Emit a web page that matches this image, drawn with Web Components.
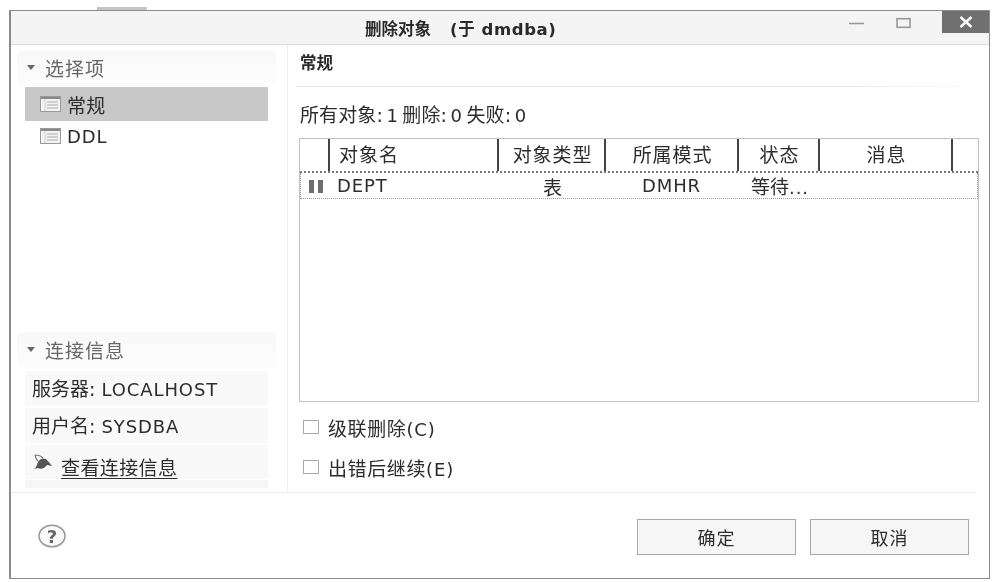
<!DOCTYPE html>
<html>
<head>
<meta charset="utf-8">
<style>
  html, body { margin: 0; background: #fff; }
  body { width: 993px; height: 582px; overflow: hidden; padding: 7px 0 0 0; box-sizing: border-box;
    font-family: "DejaVu Sans", "Noto Sans CJK SC", sans-serif; font-size: 19px; color: #2c2c2c; }
  .peek { height: 3px; width: 50px; margin-left: 97px; background: #c4c4c4; }
</style>
</head>
<body>
<div class="peek"></div>
<delete-dialog></delete-dialog>

<script>
function define(name, html) {
  customElements.define(name, class extends HTMLElement {
    constructor() {
      super();
      this.attachShadow({ mode: 'open' }).innerHTML = html;
    }
  });
}

// latin text runs are smaller and wider than the cjk ones
define('lat-n', `<style>:host{font-size:18px;letter-spacing:.9px}</style><slot></slot>`);

const listIcon = `<svg width="21" height="16" viewBox="0 0 21 16">
  <rect x=".5" y=".5" width="20" height="15" fill="#f4f4f4" stroke="#999"/>
  <rect x="1" y="1" width="19" height="2" fill="#888"/>
  <path d="M5 3v12" stroke="#ccc"/>
  <path d="M7 6h11M7 9h11M7 12h11" stroke="#aaa"/>
</svg>`;

define('list-icon', `<style>:host{display:block;width:21px;height:16px}svg{display:block}</style>${listIcon}`);

define('title-bar', `<style>
  :host{display:flex;height:33px;background:#f4f4f4;border-bottom:1px solid #dcdcdc;align-items:center}
  .t{margin-left:354px;font-weight:bold;font-size:16.5px;color:#2a2a2a;white-space:nowrap;display:flex;gap:19px}
  .b{letter-spacing:.6px}
  .ctl{margin-left:auto;display:flex;height:22px;align-self:flex-start}
  svg{display:block}
  .close{width:47px;height:22px;background:#707070;display:flex;align-items:center;justify-content:center}
</style>
<div class="t"><span>删除对象</span><span class="b">(于 dmdba)</span></div>
<div class="ctl">
  <svg width="32" height="22"><path d="M0 12.5h15" stroke="#999" stroke-width="1.6"/></svg>
  <svg width="46" height="22" style="margin-left:15px"><rect x="1" y="7.7" width="13" height="8.6" fill="none" stroke="#999" stroke-width="1.6"/></svg>
  <div class="close"><svg width="14" height="12"><path d="M1.5 1l11 10M12.5 1l-11 10" stroke="#fff" stroke-width="2.4"/></svg></div>
</div>`);

define('side-head', `<style>
  :host{display:flex;align-items:center;height:32px;padding-bottom:3px;margin-bottom:1px;box-sizing:content-box;background:linear-gradient(#f8f8f8,#fdfdfd);border-radius:3px;color:#666;padding-left:10px;gap:10px;letter-spacing:1px}
  svg{display:block}
</style>
<svg width="8" height="5"><path d="M0 0h8L4 5z" fill="#666"/></svg><span><slot></slot></span>`);

define('nav-row', `<style>
  :host{display:flex;align-items:center;gap:6px;margin-left:8px;width:243px;padding-left:15px;box-sizing:border-box;height:34px;letter-spacing:.3px}
  :host([selected]){background:#c8c8c8}
  :host(:not([selected])){height:29px}
</style>
<list-icon></list-icon><span><slot></slot></span>`);

define('info-row', `<style>
  :host{display:block;margin-left:8px;width:243px;padding-left:7px;box-sizing:border-box;height:35px;line-height:37px;background:#f9f9f9;margin-bottom:2px;white-space:nowrap}
</style><slot></slot>`);

define('conn-link', `<style>
  :host{display:block;margin-left:8px;width:243px;height:43px;box-sizing:border-box;background:linear-gradient(#f9f9f9 0,#f9f9f9 34px,#fff 34px,#fff 35px,#f6f6f6 35px)}
  .r{display:flex;align-items:flex-start;padding:9px 0 0 8px;gap:8px}
  svg{display:block;flex:none}
  a{color:inherit;text-decoration:underline;text-underline-offset:3px;line-height:27px;letter-spacing:.4px;margin-top:1px}
</style>
<div class="r">
  <svg width="20" height="18" viewBox="0 0 20 18">
    <path d="M2 1c1 3 1 5 3 6M2 1c3 0 6 1 8 3" fill="none" stroke="#777" stroke-width="1.2"/>
    <path d="M5 8c2-4 7-5 10-1l4 5-5-1c-2 3-6 5-9 3L1 15c2-1 3-4 4-7z" fill="#555"/>
  </svg>
  <a>查看连接信息</a>
</div>`);

define('obj-table', `<style>
  :host{display:block;width:680px;height:264px;box-sizing:border-box;border:1px solid #c2c2c2;background:#fff}
  .row{display:grid;grid-template-columns:30px 169px 107px 133px 81px 133px 1fr}
  .head{height:32px;line-height:33px;border-bottom:2px dotted #777;box-sizing:content-box;background:#fff}
  .head span{box-sizing:border-box;border-right:2px solid #444;text-align:center;white-space:nowrap;height:32px;letter-spacing:.9px;padding-left:2px}
  .head span:last-child{border:0}
  .head .name{text-align:left;padding-left:9px;letter-spacing:1px}
  .data{height:25px;line-height:23px;border:1px dotted #999;border-top:0;align-items:center}
  .data > *{white-space:nowrap}
  .c{text-align:center}
  .lat{padding-bottom:2px}
  .cjk{padding-top:3px;line-height:22px}
  .pause{display:flex;gap:4px;padding-left:8px}
  .pause i{display:block;width:5px;height:13px;background:#6e6e6e}
</style>
<div class="row head">
  <span></span><span class="name">对象名</span><span>对象类型</span><span>所属模式</span><span>状态</span><span>消息</span><span></span>
</div>
<div class="row data">
  <div class="pause"><i></i><i></i></div>
  <div class="lat" style="padding-left:6px"><lat-n>DEPT</lat-n></div>
  <div class="c cjk" style="padding-right:2px">表</div>
  <div class="c lat" style="padding-right:4px"><lat-n>DMHR</lat-n></div>
  <div class="cjk" style="padding-left:11px">等待<lat-n>...</lat-n></div>
  <div></div><div></div>
</div>`);

define('check-row', `<style>
  :host{display:flex;align-items:center;height:40px;padding-left:4px;gap:9px;letter-spacing:.6px}
  i{display:block;width:16px;height:14px;box-sizing:border-box;border:1px solid #aaa;background:#fff}
</style><i></i><span><slot></slot></span>`);

define('dlg-button', `<style>
  :host{display:flex;align-items:center;justify-content:center;width:159px;height:36px;box-sizing:border-box;border:1px solid #a8a8a8;background:#f6f6f6;letter-spacing:1px;font-size:18px}
</style><slot></slot>`);

define('delete-dialog', `<style>
  :host{display:flex;flex-direction:column;width:981px;height:569px;margin-left:9px;box-sizing:border-box;border:1px solid #8c8c8c;border-left-width:2px;background:#fff;filter:blur(.45px)}
  .body{display:flex;height:447px;padding-left:6px;border-bottom:1px solid #ececec;margin-right:14px}
  .side{flex:none;width:270px;border-right:1px solid #eee;display:flex;flex-direction:column;padding-top:6px;box-sizing:content-box}
  .side .sec{width:259px}
  .gap{height:183px}
  .main{flex:1;min-width:0;padding-left:11px;display:flex;flex-direction:column}
  .main h2{margin:0;height:41px;line-height:37px;font-size:16.5px;font-weight:bold;color:#2a2a2a;padding-left:1px}
  .rule{height:1px;background:linear-gradient(90deg,#e6e6e6 80%,#fff);margin-left:-3px;margin-right:-6px}
  .sum{height:51px;line-height:56px;letter-spacing:.1px;word-spacing:-2.6px;padding-left:1px;white-space:nowrap}
  .checks{padding-top:5px}
  .foot{flex:1;display:flex;align-items:flex-start;padding:26px 20px 0 27px}
  .help{display:block;margin-top:5px}
  .foot dlg-button:first-of-type{margin-left:auto;margin-right:14px}
</style>
<title-bar></title-bar>
<div class="body">
  <div class="side">
    <div class="sec">
      <side-head>选择项</side-head>
      <nav-row selected>常规</nav-row>
      <nav-row><lat-n>DDL</lat-n></nav-row>
      <div class="gap"></div>
      <side-head>连接信息</side-head>
      <div style="height:2px"></div>
      <info-row>服务器: <lat-n>LOCALHOST</lat-n></info-row>
      <info-row>用户名: <lat-n>SYSDBA</lat-n></info-row>
      <conn-link></conn-link>
    </div>
  </div>
  <div class="main">
    <h2>常规</h2>
    <div class="rule"></div>
    <div class="sum">所有对象: <lat-n>1</lat-n> 删除: <lat-n>0</lat-n> 失败: <lat-n>0</lat-n></div>
    <obj-table></obj-table>
    <div class="checks">
      <check-row>级联删除<lat-n>(C)</lat-n></check-row>
      <check-row>出错后继续<lat-n>(E)</lat-n></check-row>
    </div>
  </div>
</div>
<div class="foot">
  <svg class="help" width="28" height="24" viewBox="0 0 28 24">
    <ellipse cx="14" cy="12" rx="13" ry="10.8" fill="#fafafa" stroke="#999" stroke-width="1.6"/>
    <text x="14" y="18.5" text-anchor="middle" font-size="18" font-weight="bold" font-family="DejaVu Sans" fill="#666">?</text>
  </svg>
  <dlg-button>确定</dlg-button>
  <dlg-button>取消</dlg-button>
</div>`);
</script>
</body>
</html>
